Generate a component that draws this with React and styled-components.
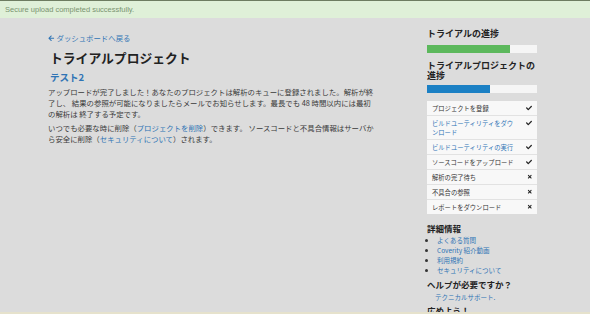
import styled, { createGlobalStyle } from 'styled-components';
import { FaArrowLeft, FaCheck, FaTimes } from 'react-icons/fa';

const GlobalStyle = createGlobalStyle`
  html, body {
    margin: 0;
    padding: 0;
    background: #dcdcdc;
  }
  body {
    font-family: 'Noto Sans CJK JP', 'Noto Sans', sans-serif;
    color: #333;
    text-spacing-trim: space-all;
  }
`;

const blue = '#2f74b5';

const Page = styled.div`
  height: 312px;
  overflow: hidden;
  background: #dcdcdc;
  border-bottom: 2px solid #e6e2cc;
`;

const Banner = styled.div`
  height: 17px;
  line-height: 17px;
  border-top: 1px solid #6d7c61;
  background: #dff0d8;
  color: #7a9470;
  font-family: 'Liberation Sans', Arial, sans-serif;
  font-size: 7.5px;
  padding-left: 5px;
`;

const Container = styled.div`
  display: flex;
  justify-content: space-between;
  width: 489px;
  margin-left: 48px;
`;

const Main = styled.div`
  width: 328px;
  padding-top: 15px;
`;

const BackLink = styled.a`
  display: flex;
  align-items: center;
  gap: 2px;
  font-size: 7.4px;
  line-height: 10px;
  color: ${blue};
  text-decoration: none;

  svg {
    font-size: 6.5px;
  }
`;

const Title = styled.h1`
  margin: 7px 0 0 2px;
  font-size: 12.8px;
  line-height: 16px;
  font-weight: 700;
  color: #222;
`;

const SubTitle = styled.h2`
  margin: 5px 0 0 2px;
  font-size: 9.5px;
  line-height: 12px;
  font-weight: 700;
  color: ${blue};
`;

const Paragraph = styled.p`
  margin: ${({ first }) => (first ? '2.5px' : '3px')} 0 0;
  font-size: 7.4px;
  line-height: 11px;
  color: #3a3a3a;

  a {
    color: ${blue};
    text-decoration: none;
  }
`;

const Sidebar = styled.div`
  width: 110px;
  padding-top: 10px;
`;

const SideTitle = styled.h3`
  margin: ${({ gap }) => gap || 0}px 0 0;
  font-size: ${({ size }) => size || 9}px;
  line-height: ${({ lh }) => lh || 12}px;
  font-weight: 700;
  color: #222;
`;

const Progress = styled.div`
  height: 8px;
  margin-top: ${({ gap }) => gap}px;
  background: #f5f5f5;
  overflow: hidden;
`;

const ProgressFill = styled.div`
  height: 100%;
  background: ${({ color }) => color};
`;

const Steps = styled.ul`
  list-style: none;
  margin: 7.5px 0 0;
  padding: 0;
  background: #f8f8f8;
`;

const Step = styled.li`
  display: flex;
  align-items: flex-start;
  padding: 3px 5px 2px;
  border-bottom: 1px solid #e2e2e2;
  font-size: 6.3px;
  line-height: 9px;
  color: ${({ link }) => (link ? blue : '#333')};

  &:last-child {
    border-bottom: none;
  }
`;

const StepText = styled.span`
  flex: 1;
  padding-right: 8px;
`;

const StepIcon = styled.span`
  display: flex;
  align-items: center;
  height: 9px;
  color: #222;
  font-size: ${({ done }) => (done ? 6 : 5.5)}px;
`;

const Links = styled.ul`
  margin: 1px 0 0;
  padding-left: 10px;
  font-size: 6.5px;
  line-height: 10.3px;
  color: #333;

  a {
    color: ${blue};
    text-decoration: none;
  }
`;

const Support = styled.a`
  display: block;
  margin: 2px 0 0 8px;
  font-size: 6.5px;
  line-height: 10px;
  color: ${blue};
  text-decoration: none;
`;

const steps = [
  { label: 'プロジェクトを登録', done: true },
  { label: 'ビルドユーティリティをダウンロード', done: true, link: true },
  { label: 'ビルドユーティリティの実行', done: true, link: true },
  { label: 'ソースコードをアップロード', done: true },
  { label: '解析の完了待ち', done: false },
  { label: '不具合の参照', done: false },
  { label: 'レポートをダウンロード', done: false },
];

const infoLinks = ['よくある質問', 'Coverity 紹介動画', '利用規約', 'セキュリティについて'];

const App = () => {
  return (
    <>
      <GlobalStyle />
      <Page>
        <Banner>Secure upload completed successfully.</Banner>
        <Container>
          <Main>
            <BackLink href="#">
              <FaArrowLeft />
              ダッシュボードへ戻る
            </BackLink>
            <Title>トライアルプロジェクト</Title>
            <SubTitle>テスト2</SubTitle>
            <Paragraph first>
              アップロードが完了しました！あなたのプロジェクトは解析のキューに登録されました。解析が終了し、 結果の参照が可能になりましたらメールでお知らせします。最長でも 48 時間以内には最初の解析は 終了する予定です。
            </Paragraph>
            <Paragraph>
              いつでも必要な時に削除（<a href="#">プロジェクトを削除</a>）できます。 ソースコードと不具合情報はサーバから安全に削除（<a href="#">セキュリティについて</a>）されます。
            </Paragraph>
          </Main>
          <Sidebar>
            <SideTitle>トライアルの進捗</SideTitle>
            <Progress gap={5}>
              <ProgressFill color="#5cb85c" style={{ width: '75%' }} />
            </Progress>
            <SideTitle gap={8} lh={10}>
              トライアルプロジェクトの進捗
            </SideTitle>
            <Progress gap={4}>
              <ProgressFill color="#1b80c4" style={{ width: '57%' }} />
            </Progress>
            <Steps>
              {steps.map((s) => (
                <Step key={s.label} link={s.link}>
                  <StepText>{s.label}</StepText>
                  <StepIcon done={s.done}>{s.done ? <FaCheck /> : <FaTimes />}</StepIcon>
                </Step>
              ))}
            </Steps>
            <SideTitle gap={8} size={8.5}>
              詳細情報
            </SideTitle>
            <Links>
              {infoLinks.map((l) => (
                <li key={l}>
                  <a href="#">{l}</a>
                </li>
              ))}
            </Links>
            <SideTitle gap={2} size={8.5}>
              ヘルプが必要ですか？
            </SideTitle>
            <Support href="#">テクニカルサポート.</Support>
            <SideTitle gap={2} size={8.5}>
              広めよう！
            </SideTitle>
          </Sidebar>
        </Container>
      </Page>
    </>
  );
};

export default App;
